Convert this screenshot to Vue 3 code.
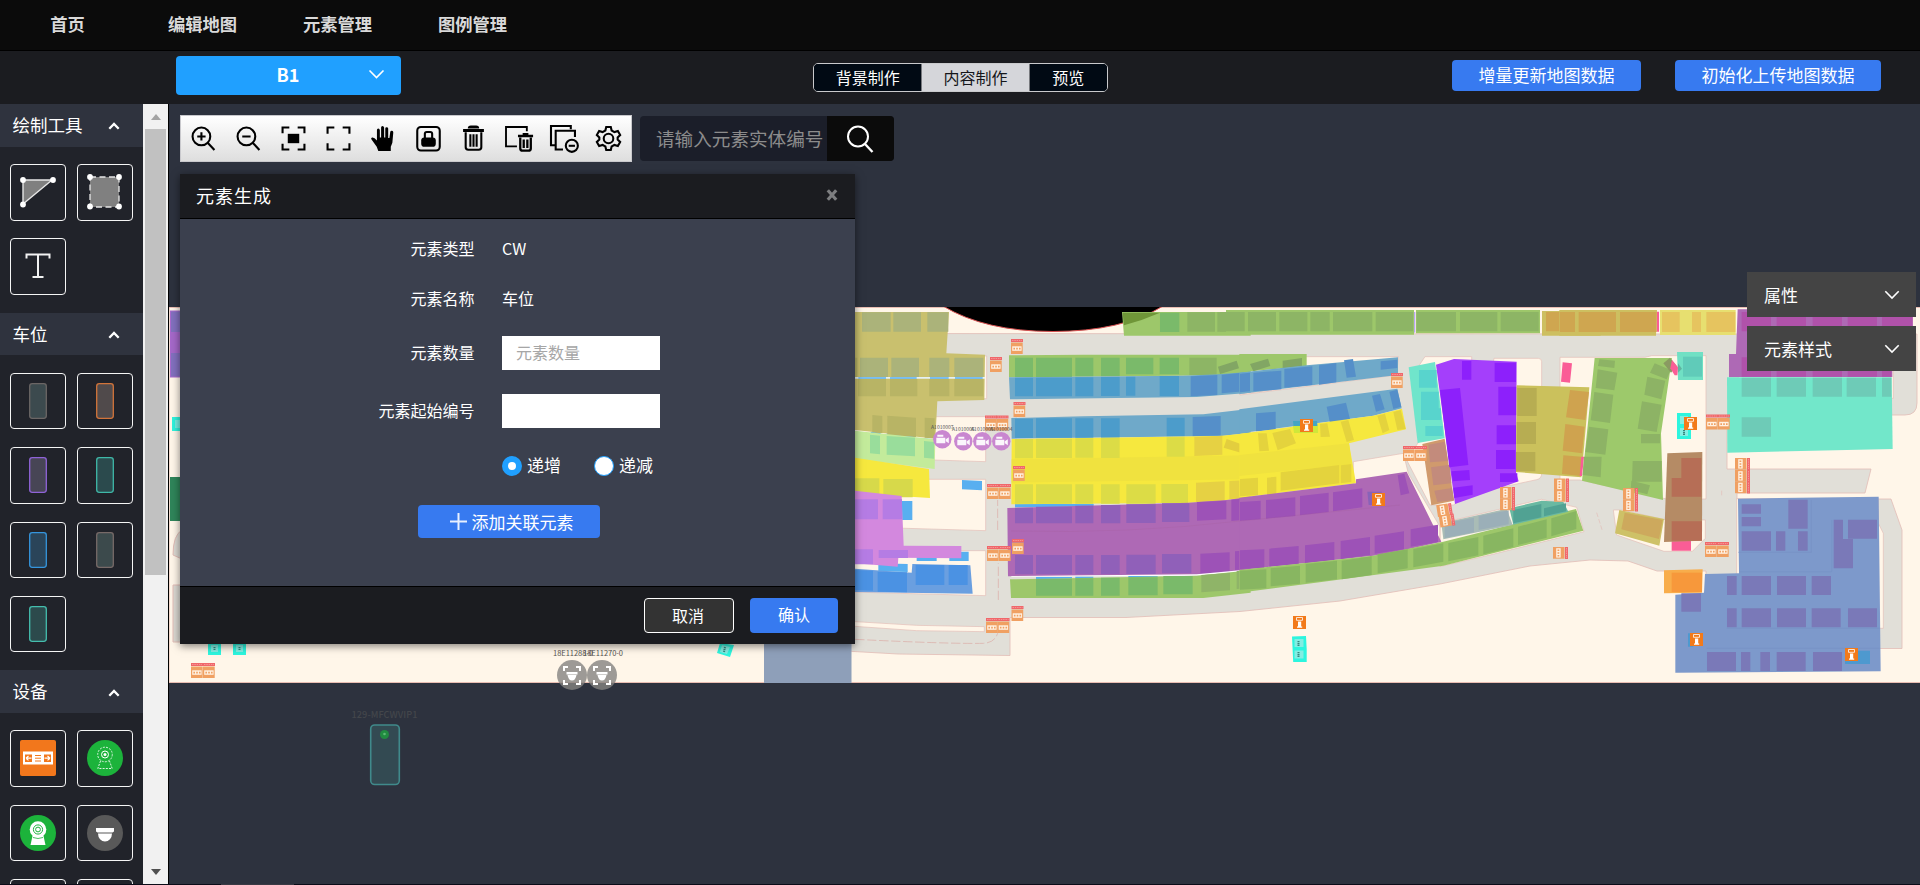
<script setup>
import { ref } from 'vue'

const navItems = ['首页', '编辑地图', '元素管理', '图例管理']
const tabs = ['背景制作', '内容制作', '预览']
const activeTab = ref(1)
const order = ref('asc')
const count = ref('')
const startNo = ref('')
const keyword = ref('')

const sections = [
  { title: '绘制工具', items: [{ k: 'poly' }, { k: 'rect' }, { k: 'text' }] },
  {
    title: '车位',
    items: [
      { k: 'slot', s: '#6b6665', f: '#3c4a4e' },
      { k: 'slot', s: '#d2743a', f: '#504a4b' },
      { k: 'slot', s: '#8f63d8', f: '#474555' },
      { k: 'slot', s: '#3fb8a8', f: '#2b4a4d' },
      { k: 'slot', s: '#3595dd', f: '#2a4459' },
      { k: 'slot', s: '#776a68', f: '#3c4a4c' },
      { k: 'slot', s: '#45beae', f: '#2c4a4c' }
    ]
  },
  { title: '设备', items: [{ k: 'gate' }, { k: 'camDash' }, { k: 'cam' }, { k: 'dome' }, { k: 'none' }, { k: 'none' }] }
]

// Parallelogram bays: [x, y, width, height, rise]
const bays = list =>
  list.map(([x, y, w, h, r = 0]) => `M${x} ${y}l${w} ${r}v${h}l${-w} ${-r}z`).join('')

const westShapes = [
  { f: '#58aff0', d: bays([[22, 230, 86, 10], [118, 230, 84, 10], [238, 230, 60, 10], [312, 230, 88, 10], [62, 395, 30, 10], [110, 400, 85, 12, 8], [220, 415, 35, 10, 3], [336, 540, 60, 28, 3], [155, 603, 32, 57], [200, 755, 60, 28], [298, 755, 58, 28], [85, 790, 88, 24, 2], [495, 612, 236, 10]]) },
  { f: '#c9c06e', d: 'M15 36H297L289 160L405 164L403 300L262 304L256 416L15 390Z' },
  { f: '#abb37a', d: bays([[36, 37, 86, 58], [130, 37, 83, 58], [232, 37, 63, 58], [30, 173, 84, 58], [124, 173, 83, 58], [238, 173, 60, 58], [313, 173, 87, 58]]) },
  { f: '#b8b465', d: bays([[24, 237, 84, 52], [120, 237, 82, 52], [238, 237, 60, 52], [313, 237, 87, 52], [67, 345, 30, 52, 3], [112, 347, 86, 58, 6], [224, 353, 30, 60, 2], [15, 173, 7, 58]]) },
  { f: '#e4f0f4', d: 'M15 231H405V236H15Z' },
  { f: '#58aff0', d: bays([[25, 232, 83, 4], [120, 232, 80, 4], [240, 232, 56, 4], [315, 232, 83, 4]]) },
  { f: '#c3eb9b', d: 'M15 392L256 418L254 507L15 476Z' },
  { f: '#99dd9b', d: bays([[60, 404, 30, 56, 3], [110, 408, 85, 56, 5], [222, 423, 30, 50, 3]]) },
  { f: '#f6e83e', d: 'M15 473L237 507L240 594L15 580Z' },
  { f: '#d7d94a', d: bays([[15, 535, 73, 47], [100, 537, 88, 55]]) },
  { f: '#d388de', d: 'M15 572L155 588L161 737L334 738L334 775L145 773L143 800L15 790Z' },
  { f: '#b57ce4', d: bays([[15, 598, 69, 60], [98, 598, 58, 60], [15, 748, 54, 45], [86, 750, 88, 24]]) },
  { f: '#6a9fe0', d: 'M15 806L185 818L187 792L361 796L368 881L15 876Z' },
  { f: '#4b92e3', d: bays([[15, 810, 54, 60, 2], [83, 815, 88, 60, 2], [197, 795, 86, 60], [296, 795, 57, 60]]) },
  { f: '#9dc76a', d: 'M477 166L700 164H1202V225L477 232ZM816 36H1202V107H822Z' },
  { f: '#7aba6a', d: bays([[495, 173, 54, 58], [558, 173, 108, 58], [676, 173, 54, 56], [753, 173, 56, 56], [828, 173, 82, 50], [929, 173, 58, 50], [930, 38, 58, 58]]) },
  { f: '#8db565', d: bays([[1018, 173, 82, 52], [1012, 37, 83, 58], [1102, 37, 84, 58], [1194, 37, 6, 58]]) },
  { f: '#82a664', d: 'M1104 200L1160 182L1167 205L1110 222Z' },
  { f: '#6fa9c9', d: 'M477 232L1000 227L1105 223L1202 215V278L1040 291L480 298ZM484 354L700 349L1060 343L1202 326V398L1115 408L485 416Z' },
  { f: '#4c9ccb', d: bays([[495, 233, 54, 56], [558, 233, 108, 56], [676, 232, 54, 57], [753, 231, 56, 57], [828, 230, 28, 57], [929, 228, 58, 60], [495, 356, 54, 58], [558, 355, 108, 58], [676, 355, 54, 58], [753, 355, 56, 58], [950, 353, 54, 56]]) },
  { f: '#558fc9', d: bays([[1022, 229, 80, 60, -4], [1115, 224, 85, 56, -8], [1028, 351, 84, 58, -3]]) },
  { f: '#f6e83e', d: 'M485 417L1110 408L1202 398V590L1130 600L1020 608L484 613Z' },
  { f: '#f0e23f', d: 'M485 478L1202 466V538L485 548Z' },
  { f: '#dcdc46', d: bays([[495, 417, 54, 58], [558, 416, 108, 58], [676, 415, 54, 58], [753, 414, 56, 60], [950, 412, 54, 58], [495, 553, 54, 58], [558, 553, 108, 58], [676, 553, 54, 58], [753, 553, 56, 58], [829, 553, 88, 58], [934, 552, 80, 57]]) },
  { f: '#e6d143', d: bays([[1033, 411, 84, 57, -4], [1038, 548, 86, 58, -4], [1138, 543, 62, 54, -3]]) },
  { f: '#e3ce3e', d: 'M1130 417L1183 436L1175 459L1121 443Z' },
  { f: '#ae69b5', d: 'M472 624L1015 608L1130 600L1202 590V810L1040 826L474 829Z' },
  { f: '#9060b9', d: bays([[495, 623, 54, 47], [558, 620, 108, 50], [676, 617, 54, 53], [753, 615, 58, 55], [829, 613, 88, 56], [936, 610, 82, 56], [495, 765, 54, 58], [558, 765, 108, 58], [676, 765, 54, 58], [753, 765, 56, 58], [829, 764, 88, 58], [936, 762, 88, 58]]) },
  { f: '#9d52b7', d: bays([[1041, 606, 88, 56, -4], [1144, 599, 56, 64, -5], [1051, 761, 88, 60, -4], [1155, 754, 45, 56, -3]]) },
  { f: '#fff', d: 'M484 838V830L1040 827L1202 812V808L1040 823L484 828Z' },
  { f: '#58aff0', d: bays([[558, 831, 108, 6], [676, 830, 54, 6], [835, 828, 88, 5]]) },
  { f: '#9dc76a', d: 'M480 838L1040 827L1202 811V878L1060 894H483Z' },
  { f: '#7aba6a', d: bays([[558, 837, 108, 50], [676, 835, 54, 52], [753, 833, 56, 54], [835, 832, 88, 54], [940, 828, 88, 55]]) },
  { f: '#8fb468', d: bays([[1054, 825, 86, 52, -6], [1160, 813, 40, 54, -3]]) }
]

const midShapes = [
  { f: '#9dc76a', d: 'M-42 150H522V224H-42ZM528 150H900V220H528Z' },
  { f: '#8db565', d: bays([[-60, 156, 74, 58], [24, 156, 84, 58], [118, 156, 84, 58], [211, 156, 58, 58], [279, 156, 118, 58], [407, 156, 112, 58], [530, 156, 118, 58], [660, 156, 112, 58], [782, 156, 114, 58]]) },
  { f: '#cdbf60', d: 'M906 153H1082V227H906Z' },
  { f: '#cfa650', d: bays([[918, 156, 86, 58], [1016, 156, 66, 58]]) },
  { f: '#9dc76a', d: 'M-2 282H200V318L-2 337Z' },
  { f: '#82a664', d: 'M30 312L84 296L91 318L40 334ZM128 302L186 294V318L128 325Z' },
  { f: '#6fa9c9', d: 'M-2 338L200 316L474 292V345L-2 402ZM-2 448L472 386L485 445L400 467L-2 520Z' },
  { f: '#558fc9', d: bays([[0, 341, 30, 56, -3], [40, 338, 84, 56, -6], [133, 327, 84, 56, -8], [237, 316, 52, 58, -7], [422, 304, 50, 25, -5], [48, 460, 59, 54, -5]]) + 'M312 301L339 297L348 350L320 353ZM260 440L318 428L330 478L270 490ZM396 407L420 402L434 448L408 455ZM448 395L472 389L484 440L460 447Z' },
  { f: '#f6e83e', d: 'M-2 522L400 467L486 446L498 508L327 550L348 670L-2 713Z' },
  { f: '#f0e23f', d: 'M-2 585L327 550L335 612L-2 648Z' },
  { f: '#e4d33d', d: bays([[0, 657, 54, 52, -4], [122, 637, 176, 55, -22], [302, 616, 32, 54, -4], [81, 653, 28, 56, -3]]) + 'M54 520H80L87 572L58 574ZM97 519L150 507L168 550L113 571ZM240 492L262 490L270 530L242 531ZM302 485L325 480L342 540L320 546ZM412 467L435 461L448 510L428 520ZM460 456L482 450L497 507L472 510Z' },
  { f: '#ae69b5', d: 'M-2 713L348 670L348 658L500 635L604 845L480 873L400 887L-2 930Z' },
  { f: '#9d52b7', d: bays([[0, 726, 62, 56, -4], [78, 720, 88, 56, -8], [180, 708, 86, 58, -10], [279, 697, 88, 57, -12], [0, 871, 73, 56, -3], [88, 866, 88, 54, -8], [195, 856, 88, 54, -10], [302, 843, 88, 54, -12], [404, 827, 88, 54, -13], [512, 808, 82, 52, -14]]) + 'M473 645L493 641L508 700L482 706Z' },
  { f: '#8863b8', d: 'M382 695H425V735H386Z' },
  { f: '#9dc76a', d: 'M-2 930L400 887L610 845L810 795L1008 747L1030 812L750 882L610 917L250 965L-2 998Z' },
  { f: '#88b661', d: bays([[0, 932, 79, 57, -4], [92, 925, 88, 54, -8], [197, 912, 94, 56, -10], [305, 902, 90, 56, -13], [413, 883, 90, 57, -15], [520, 867, 90, 55, -17], [625, 849, 90, 55, -18], [730, 827, 90, 56, -22], [834, 800, 86, 55, -22], [934, 775, 75, 54, -22]]) },
  { f: '#a9bcb6', d: 'M604 790L800 746L818 795L610 838Z' },
  { f: '#9bafb8', d: bays([[614, 790, 88, 44, -17], [716, 768, 90, 42, -17]]) },
  { f: '#6ab9a2', d: 'M808 745L905 722L970 726L985 755L820 794Z' },
  { f: '#51a293', d: bays([[820, 750, 84, 40, -18], [912, 745, 66, 24, -15]]) },
  { f: '#70e5cb', d: 'M506 322L585 306L614 535L533 549Z' },
  { f: '#58d4cd', d: bays([[537, 330, 53, 53], [543, 395, 53, 85], [553, 445, 50, 35], [556, 498, 52, 30]]) },
  { f: '#d09a6d', d: 'M547 552L614 536L642 722L574 736Z' },
  { f: '#c38b7c', d: 'M565 554L614 545L624 603L570 607ZM573 622L630 614L634 670L580 676ZM583 692L636 684L642 720L592 726Z' },
  { f: '#a43ffb', d: 'M588 314L642 297L830 305L828 637L836 664L645 732Z' },
  { f: '#8d20fb', d: bays([[666, 303, 28, 56], [764, 308, 64, 58], [775, 380, 54, 86], [770, 496, 58, 57], [768, 570, 58, 57], [780, 640, 52, 26]]) + 'M600 390L660 384L685 615L628 622ZM634 634L688 630L690 660L638 664ZM640 683L698 676V704L643 714Z' },
  { f: '#cbc15c', d: 'M830 376L1048 382L1024 652L828 636Z' },
  { f: '#b7ad52', d: bays([[832, 384, 58, 84], [830, 486, 58, 66], [828, 576, 58, 58]]) },
  { f: '#cfa34f', d: 'M990 390L1047 396L1036 480L978 472ZM976 492L1034 500L1026 580L968 572ZM970 586L1024 590V648L966 642Z' },
  { f: '#fa5d96', d: 'M968 307L996 310L990 368L963 365ZM1024 590H1032L1026 648H1019Z' }
]

const eastShapes = [
  { f: '#fa5d96', d: 'M290 155H297V215H290ZM335 840H393V872H335Z' },
  { f: '#cdbf60', d: 'M-2 150H291L288 227H-2Z' },
  { f: '#cfa650', d: bays([[0, 156, 45, 60], [56, 156, 112, 60], [180, 156, 110, 60]]) },
  { f: '#e7df70', d: 'M300 150H527V225H300Z' },
  { f: '#e6c45f', d: bays([[306, 156, 53, 60], [396, 156, 27, 60], [439, 156, 87, 60]]) },
  { f: '#9dc96b', d: 'M104 294H336L303 520L309 720L66 662Z' },
  { f: '#8db365', d: 'M118 298L165 302L163 324L114 318ZM113 328L172 338L163 391L107 384ZM103 396L160 404L150 489L92 481ZM87 500L145 508L136 584L76 576ZM72 590H125L122 652L68 645ZM284 310L332 330L320 358L270 338ZM262 350L316 362L304 418L253 404ZM246 424L305 434L290 516L233 506ZM243 522H300V550H243ZM218 603H305V665H216ZM214 662L270 676L262 703L212 690Z' },
  { f: '#70e0c4', d: 'M351 276H429V360H354Z' },
  { f: '#60cbb9', d: 'M369 290H426V350H369Z' },
  { f: '#8a9a62', d: 'M310 310L330 293L350 318L333 338Z' },
  { f: '#fa5d96', d: 'M336 300L354 322L352 346L344 346L331 325Z' },
  { f: '#62b3a0', d: 'M354 310L366 326L354 338Z' },
  { f: '#ae69b5', d: 'M533 148H1058V200H997V351H507V282H528Z' },
  { f: '#b052aa', d: bays([[545, 156, 88, 58], [650, 156, 88, 58], [758, 156, 88, 58], [863, 156, 88, 58], [966, 156, 92, 42], [545, 292, 88, 58], [650, 292, 88, 58], [758, 292, 88, 58], [863, 292, 88, 58], [966, 292, 28, 58]]) },
  { f: '#72e7ca', d: 'M501 352H995L998 567L502 578Z' },
  { f: '#6ecbb7', d: bays([[545, 353, 88, 57], [650, 353, 88, 57], [758, 353, 88, 57], [860, 353, 88, 57], [966, 353, 28, 57], [545, 472, 88, 58]]) },
  { f: '#b58b65', d: 'M322 580L427 576L426 842L312 846Z' },
  { f: '#b66e56', d: 'M364 594H424V710H335V654H364ZM335 784H426V842H335Z' },
  { f: '#cec167', d: 'M178 750L312 777L298 857L165 820Z' },
  { f: '#cda95d', d: 'M194 758L308 780L297 837L184 808Z' },
  { f: '#f8ad4b', d: 'M312 931L428 928L426 998L312 1000Z' },
  { f: '#f7983b', d: 'M335 938H426V996H335Z' },
  { f: '#7d99cb', d: 'M534 716L956 710L962 1234L346 1238V1004L432 998L435 942L537 940Z' },
  { f: '#7a79b8', d: bays([[545, 733, 58, 28], [545, 771, 58, 28], [685, 719, 58, 87], [545, 814, 88, 58], [648, 814, 28, 58], [714, 814, 29, 58], [821, 779, 28, 58], [864, 779, 87, 57], [821, 837, 58, 88], [501, 948, 29, 57], [545, 948, 88, 57], [651, 948, 87, 57], [755, 948, 58, 57], [501, 1045, 29, 57], [545, 1045, 88, 57], [651, 1045, 87, 57], [755, 1045, 87, 57], [864, 1045, 87, 57], [364, 1000, 59, 55], [441, 1176, 87, 57], [543, 1176, 28, 57], [601, 1176, 29, 57], [650, 1176, 87, 57], [759, 1176, 87, 57]]) },
  { f: '#4e99cf', d: 'M384 1120H400V1160H384ZM855 1172H930V1212H855Z' }
]

const gates = [
  [1011, 339], [990, 357], [1013.5, 402], [985, 415.5], [996.5, 415.5], [1013, 466], [987, 484], [999, 484],
  [1012, 539], [987, 546], [999, 546], [1011.5, 606], [986, 618], [997.5, 618], [1391, 373], [1403, 446],
  [1415, 446], [1706, 414.5], [1718, 414.5], [1705, 542], [1717, 542], [191, 663], [203, 663]
]
const sideGates = [
  [1500, 487, 90], [1500, 498.5, 90], [1554, 478.5, 90], [1554, 490, 90], [1553, 547, 90], [1436, 503, 81],
  [1438.5, 513.5, 81], [1623, 488, 90], [1623, 499.5, 90], [1735, 458, 90], [1735, 470, 90], [1735, 481.5, 90]
]
const posts = [[1300, 419], [1372, 493], [1293, 616], [1684, 417], [1690, 633], [1845, 648]]
const mapCams = [[942.3, 439.3, 'A1010007'], [963.3, 441.3, 'A1010006'], [982.3, 441.3, 'A1010005'], [1001.3, 441.3, 'A1010004']]
</script>

<template>
  <div class="page">
    <nav class="nav">
      <a v-for="n in navItems" :key="n">{{ n }}</a>
    </nav>

    <header class="bar">
      <div class="floor">
        <b>B1</b>
        <svg width="17" height="11" viewBox="0 0 17 11"><path d="M1.5 1.5L8.5 8.5L15.5 1.5" fill="none" stroke="#fff" stroke-width="1.6" /></svg>
      </div>
      <div class="tabs">
        <span v-for="(t, i) in tabs" :key="t" :class="{ on: i === activeTab }" @click="activeTab = i">{{ t }}</span>
      </div>
      <div class="actions">
        <button class="blue">增量更新地图数据</button>
        <button class="blue">初始化上传地图数据</button>
      </div>
    </header>

    <div class="main">
      <aside class="side">
        <section v-for="s in sections" :key="s.title">
          <h3>
            {{ s.title }}
            <svg width="12" height="8" viewBox="0 0 12 8"><path d="M1.3 6.8L6 2L10.700 6.800" fill="none" stroke="#fff" stroke-width="2.300" /></svg>
          </h3>
          <div class="tools">
            <div v-for="(it, i) in s.items" :key="i" class="tool">
              <svg width="54" height="54" viewBox="0 0 54 54">
                <g v-if="it.k === 'poly'">
                  <path d="M12 15H41L12 39Z" fill="#808080" stroke="#e6e6e6" stroke-width="1.400" />
                  <circle cx="12" cy="15" r="2.900" fill="#fff" /><circle cx="42" cy="15" r="2.900" fill="#fff" /><circle cx="12" cy="39.500" r="2.900" fill="#fff" />
                </g>
                <g v-else-if="it.k === 'rect'">
                  <rect x="12" y="12" width="29" height="30" fill="#808080" />
                  <path d="M12 12H41V42H12Z" fill="none" stroke="#e6e6e6" stroke-width="1.300" stroke-dasharray="6 3.500" />
                  <circle cx="12" cy="12" r="2.900" fill="#fff" /><circle cx="41" cy="12" r="2.900" fill="#fff" /><circle cx="12" cy="41.500" r="2.900" fill="#fff" /><circle cx="41" cy="41.500" r="2.900" fill="#fff" />
                </g>
                <path v-else-if="it.k === 'text'" d="M15.500 19.500V15.500H38.500V19.500M27 15.500V38M21.500 38H32.500" fill="none" stroke="#f2f2f2" stroke-width="2" />
                <rect v-else-if="it.k === 'slot'" x="18.700" y="9.700" width="16.600" height="34.600" rx="2.500" :fill="it.f" :stroke="it.s" stroke-width="1.300" />
                <g v-else-if="it.k === 'gate'">
                  <rect x="9" y="9" width="36" height="36" rx="2" fill="#f2771c" />
                  <rect x="12" y="20.500" width="30" height="13" fill="#fff" />
                  <path d="M14 23.500h7v7.500h-7zM33 23.500h7v7.500h-7z" fill="#f2771c" />
                  <path d="M15 27.200h5.500M15 27.200l2.500-2.200M15 27.200l2.500 2.200M39 27.200h-5.500M39 27.200l-2.500-2.200M39 27.200l-2.500 2.200" stroke="#fff" stroke-width="1.200" fill="none" />
                  <path d="M24 24.500h6M24 27.200h6M24 30h6" stroke="#f2771c" stroke-width="1" />
                </g>
                <g v-else-if="it.k === 'camDash'">
                  <circle cx="27" cy="27" r="18" fill="#1cb33b" />
                  <circle cx="27" cy="23.500" r="7.300" fill="none" stroke="#d9f4de" stroke-width="1" stroke-dasharray="2 1.200" />
                  <circle cx="27" cy="23.500" r="3.500" fill="none" stroke="#fff" /><circle cx="27" cy="23.500" r="1.500" fill="#fff" />
                  <path d="M22.500 30L19.800 37.500H34.200L31.500 30" fill="none" stroke="#d9f4de" stroke-width="1" stroke-dasharray="2 1.200" />
                </g>
                <g v-else-if="it.k === 'cam'">
                  <circle cx="27" cy="27" r="18" fill="#1cb33b" />
                  <path d="M21.500 30H32.500L34.500 39H19.500Z" fill="#fff" />
                  <circle cx="27" cy="23.500" r="8.300" fill="#fff" />
                  <circle cx="27" cy="23.500" r="4.600" fill="none" stroke="#1cb33b" stroke-width="1" /><circle cx="27" cy="23.500" r="2.400" fill="none" stroke="#1cb33b" stroke-width="1" />
                  <path d="M22 31.500Q27 33.500 32 31.500" stroke="#1cb33b" fill="none" stroke-width=".8" />
                </g>
                <g v-else-if="it.k === 'dome'">
                  <circle cx="27" cy="27" r="18" fill="#595959" />
                  <path d="M18 22h18v3.600q-1 .8-1.500.8h-15q-.500 0-1.500-.8zM20 27.500h14a7 8 0 0 1-14 0z" fill="#fff" />
                </g>
              </svg>
            </div>
          </div>
        </section>
      </aside>
      <div class="scroll">
        <i class="up"></i><div class="thumb"></div><i class="down"></i>
      </div>

      <main class="canvas">
        <svg class="map" width="1751" height="780" viewBox="169 104 1751 780">
          <defs>
            <g id="gate">
              <rect width="12" height="3" fill="#f0676a" />
              <path d="M1 1.500h10" stroke="#f8a0a0" stroke-width=".8" stroke-dasharray="1.500 .8" />
              <rect y="3.500" width="11.700" height="11.500" fill="#f0a062" />
              <rect x="1.200" y="7.300" width="9.400" height="4.500" fill="#fff1e2" />
              <path d="M2.400 9.600h1.600M5.200 9.600h1.600M8 9.600h1.600" stroke="#f0a062" stroke-width="1.800" />
            </g>
            <g id="post">
              <rect width="13" height="13" fill="#f27a1a" />
              <path d="M3.500 1.500h6v2.800h-6z" fill="none" stroke="#fff" stroke-width=".8" />
              <path d="M5 5.500h3.200v5h1v1.200H4v-1.200h1z" fill="#fff" />
            </g>
            <clipPath id="sheet"><rect x="169" y="307" width="1751" height="376" /></clipPath>
          </defs>

          <rect x="169" y="307.500" width="1752" height="375" fill="#fff6e9" stroke="#e9bdb2" />
          <g clip-path="url(#sheet)">
            <path fill="#e1dfd8" stroke="#e2bdb6" stroke-width=".8" d="M845 333.500L1735 334H1917V403Q1917 415 1905 415H1727V469H1871L1865 493H1737V499H1891L1902 530V648.500H1706V571H1657L1628 561L1590 560L1560 563L1530 566L1440 584L1340 601L1240 611.500L1126 617.500H1010V655.500L898 654L845 651Z" />
            <g transform="translate(850 300) scale(.33333)" fill="#fff6e9" stroke="#e2bdb6" stroke-width="2">
              <path d="M0 168H410V296H0ZM0 333L260 350H407V485L250 480L0 458ZM0 518L240 538H407V692L0 680ZM0 745L240 752H407V887L0 876ZM0 964L200 976L403 980V995L200 992L0 978Z" />
            </g>
            <g transform="translate(1240 260) scale(.33333)" fill="#fff6e9" stroke="#e2bdb6" stroke-width="2">
              <path d="M180 290H475L470 345L0 405V320ZM340 605L490 580L505 640L600 800V850L340 700ZM535 320L555 290H695V700L640 735L570 735L500 600L540 540ZM762 295H895Q905 295 905 305V640Q905 656 890 659L700 700ZM600 790L905 718L1010 742L1032 815L750 885L600 920ZM-2 310V402L100 390Z" />
            </g>
            <g transform="translate(1560 260) scale(.33333)" fill="#fff6e9" stroke="#e2bdb6" stroke-width="2">
              <path d="M0 292H255L275 287H438V717H320L60 660H0ZM160 750H185L320 780H436V835L397 874H312L170 825ZM535 287H1000V415H535ZM955 790L970 820V1105H500V960H530V716H955Z" />
              <path d="M110 758L128 815M485 692V710" stroke-dasharray="14 6" />
            </g>
            <path d="M943 306Q985 331.500 1053 331.500Q1122 331.500 1163 306Z" fill="#000" stroke="#d65050" />
            <g transform="translate(850 300) scale(.33333)">
              <path v-for="(s, i) in westShapes" :key="i" :fill="s.f" :d="s.d" />
              <path d="M818 38L930 38Q880 60 822 76Z" fill="#6f9638" />
              <path d="M15 1018Q300 1032 400 1030Q440 1028 445 990M445 900V790M443 690V600" fill="none" stroke="#dcb4ae" stroke-width="2.500" stroke-dasharray="28 8" />
            </g>
            <g transform="translate(1240 260) scale(.33333)">
              <path v-for="(s, i) in midShapes" :key="i" :fill="s.f" :d="s.d" />
              <path d="M524 156V218" stroke="#b9a8f0" stroke-width="4" />
            </g>
            <g transform="translate(1560 260) scale(.33333)">
              <path v-for="(s, i) in eastShapes" :key="i" :fill="s.f" :d="s.d" />
              <path d="M440 1165H960M500 1105H960M754 720V877H535M815 780V935H540" fill="none" stroke="#7791c6" stroke-width="2" />
            </g>
            <path d="M1011 531Q1130 534 1240 521L1400 505" fill="none" stroke="#a05a90" stroke-opacity=".18" />
            <rect x="170.500" y="311" width="12" height="66" fill="#8270be" stroke="#a868cc" /><rect x="171" y="332" width="12" height="21" fill="#a468c8" />
            <path d="M172 417h12v14h-12z" fill="#2ff3dd" /><path d="M175 420h8v8h-8z" fill="#74efe2" />
            <rect x="170" y="477" width="14" height="44" fill="#2f855a" />
            <path d="M182 530Q173 535 173 555L182 559ZM173 585H184V642H173Z" fill="#dcd9d2" stroke="#e2bdb6" />
            <path d="M208 643h13v12h-13zM233 643h13v12h-13zM720 643l14 2l-4 12l-13-4zM1292 636.500l14-.5l.7 13v13h-13.500zM1677 413h14v26h-14z" fill="#2df5de" />
            <path d="M211 645h7v7h-7zM236 645h7v7h-7zM722 645l8 2l-3 7l-7-2zM1294.500 639h9v8h-9zM1294.500 650.500h9v8h-9zM1680 416h8v8h-8zM1680 428h8v8h-8z" fill="#82eee3" />
            <path d="M1298.500 641v5M1298.500 652v5M1684 430v5M214.500 647v3M239.500 647v3M725 647l-1 5" stroke="#35857e" stroke-width="2" stroke-dasharray="1.300 .6" />
            <rect x="764" y="640" width="87.500" height="43" fill="#8e9fb9" />
            <path d="M1293 426h25v7h-24z" fill="#cfe83a" /><path d="M1293 421h24l.5 5h-24z" fill="#45a5c4" />
            <use v-for="(g, i) in gates" :key="'g' + i" href="#gate" :transform="`translate(${g[0]} ${g[1]})`" />
            <use v-for="(g, i) in sideGates" :key="'s' + i" href="#gate" :transform="`translate(${g[0] + 15} ${g[1]}) rotate(${g[2]})`" />
            <use v-for="(p, i) in posts" :key="'p' + i" href="#post" :transform="`translate(${p[0]} ${p[1]})`" />
            <g v-for="c in mapCams" :key="c[2]" :transform="`translate(${c[0]} ${c[1]})`">
              <circle r="9.200" fill="#c987d0" />
              <path d="M-6-1.500h9v5.500h-9zM3.500 0l3-2v6l-3-2zM-5-4.500h6v2h-6z" fill="#fff" fill-opacity=".92" />
              <text y="-10.800" text-anchor="middle" class="tiny">{{ c[2] }}</text>
            </g>
          </g>

          <g v-for="x in [572, 602]" :key="x" :transform="`translate(${x} 675)`">
            <circle r="15" fill="#858381" fill-opacity=".8" />
            <path d="M-8-4v-4h4M4-8h4v4M8 5v4h-4M-4 9h-4v-4" fill="none" stroke="#fff" stroke-width="2" />
            <path d="M-5.500-3h11v2.500h-11zM-4.500 0h9q-1 5.500-4.500 5.500t-4.500-5.500z" fill="#fff" />
          </g>
          <text x="573" y="656" text-anchor="middle" textLength="40" class="label">18E11288-0</text>
          <text x="603" y="656" text-anchor="middle" textLength="40" class="label">18E11270-0</text>
          <text x="384.500" y="718" text-anchor="middle" textLength="66" class="ghost">129-MFCWVIP1</text>
          <rect x="370.700" y="725" width="28.600" height="59.500" rx="4" fill="#334a52" stroke="#408a8b" stroke-width="1.600" />
          <circle cx="384.500" cy="734.500" r="4.500" fill="#218b40" /><circle cx="384.500" cy="734" r="1.300" fill="#5bb873" />
        </svg>

        <div class="top">
          <div class="toolbar">
            <svg viewBox="0 0 24 24"><circle cx="10" cy="10" r="8.500" /><path d="M16 16L22.500 23M6 10H14M10 6V14" /></svg>
            <svg viewBox="0 0 24 24"><circle cx="10" cy="10" r="8.500" /><path d="M16 16L22.500 23M6 10H14" /></svg>
            <svg viewBox="0 0 24 24"><path d="M1.500 7V1.500H8M16 1.500H22.500V7M22.500 17V22.500H16M8 22.500H1.500V17" /><rect x="6.500" y="7.500" width="11" height="9" fill="#000" stroke="none" /></svg>
            <svg viewBox="0 0 24 24"><path d="M1.500 7.500V1.500H8M16 1.500H22.500V7.500M22.500 16.500V22.500H16M8 22.500H1.500V16.500" /></svg>
            <svg viewBox="0 0 24 24"><path d="M7 24L5.500 20L.5 13Q-.5 11.500 1 11Q3 10.500 5.700 14V4Q5.700 2.500 7 2.500T8.500 4V11H9.700V1.500Q9.700 0 11 0T12.600 1.500V11H13.700V2.500Q13.700 1.200 15 1.200T16.500 2.500V11.500H17.700L18.500 5.500Q19 4.300 20.200 4.600T21.400 6.200L20.500 16L19 20V24Z" fill="#000" stroke="none" /></svg>
            <svg viewBox="0 0 24 24"><rect x="1.200" y="1" width="21.600" height="22.500" rx="3.500" /><path d="M8.500 12V7.500Q8.500 5.700 10.300 5.700H13.700Q15.500 5.700 15.500 7.500V12" /><rect x="5" y="11" width="14" height="9" rx="3" fill="#000" stroke="none" /></svg>
            <svg viewBox="0 0 24 24"><path d="M8 2.500Q8 1 9.500 1H14.500Q16 1 16 2.500M2 4.300H22" stroke-width="3" /><path d="M4.500 6V20.500Q4.500 22.800 7 22.800H17Q19.500 22.800 19.500 20.500V6M9 8V20M12 8V20M15 8V20" /></svg>
            <svg viewBox="0 0 24 24"><path d="M10.500 19.500H0V1H20V5" stroke-width="1.800" /><path d="M11.500 9.500H26M16 8H21.500" stroke-width="2.400" /><path d="M13.700 11V21.500Q13.700 23.700 16 23.700H21.500Q23.800 23.700 23.800 21.500V11M17 13V21M20.500 13V21" stroke-width="2.200" /></svg>
            <svg viewBox="0 0 24 24"><path d="M4 18.500H0V0H19V3" /><path d="M11.500 22.500H4.500V4.500H23V10.500" /><circle cx="20" cy="19" r="5.800" /><path d="M17 19H23" /></svg>
            <svg viewBox="0 0 24 24"><path d="M9.800 1H14.200L15 4.300L17.700 5.800L21 4.800L23.200 8.600L20.800 11V13L23.200 15.400L21 19.200L17.700 18.200L15 19.700L14.200 23H9.800L9 19.700L6.300 18.200L3 19.200L.8 15.400L3.200 13V11L.8 8.600L3 4.800L6.300 5.800L9 4.300Z" /><circle cx="12" cy="12" r="4.600" /></svg>
          </div>
          <div class="search">
            <input v-model="keyword" placeholder="请输入元素实体编号" />
            <button><svg width="30" height="30" viewBox="0 0 30 30"><circle cx="13" cy="12.500" r="10" fill="none" stroke="#fff" stroke-width="2" /><path d="M20 20L27.500 28" stroke="#fff" stroke-width="2.400" /></svg></button>
          </div>
        </div>

        <div class="dialog">
          <div class="dhead">
            <span>元素生成</span>
            <svg width="12" height="12" viewBox="0 0 12 12"><path d="M1.800 1.300L10.200 10.700M10.200 1.300L1.800 10.700" stroke="#7d7e80" stroke-width="3.200" /></svg>
          </div>
          <div class="dbody">
            <div class="row r1"><label>元素类型</label><span>CW</span></div>
            <div class="row r2"><label>元素名称</label><span>车位</span></div>
            <div class="row r3"><label>元素数量</label><input v-model="count" placeholder="元素数量" /></div>
            <div class="row r4"><label>元素起始编号</label><input v-model="startNo" /></div>
            <div class="row r5">
              <label></label>
              <span class="radio" @click="order = 'asc'"><i :class="{ on: order === 'asc' }"></i><em>递增</em></span>
              <span class="radio" @click="order = 'desc'"><i :class="{ on: order === 'desc' }"></i><em>递减</em></span>
            </div>
            <button class="blue add">
              <svg width="17" height="17" viewBox="0 0 17 17"><path d="M8.500 0V17M0 8.500H17" stroke="#e8f0ff" stroke-width="2" /></svg>添加关联元素
            </button>
          </div>
          <div class="dfoot">
            <button class="cancel">取消</button>
            <button class="blue ok">确认</button>
          </div>
        </div>

        <div class="panels">
          <div v-for="p in ['属性', '元素样式']" :key="p">
            {{ p }}
            <svg width="16" height="10" viewBox="0 0 16 10"><path d="M1.300 1.300L8 8L14.700 1.300" fill="none" stroke="#fff" stroke-width="1.600" /></svg>
          </div>
        </div>
      </main>
    </div>
    <div class="bottom"><i></i></div>
  </div>
</template>

<style>
body { margin: 0; background: #1b1c20; }
</style>

<style scoped>
.page, .page * { box-sizing: border-box; }
.page {
  width: 1920px; height: 885px; overflow: hidden; display: flex; flex-direction: column;
  font: 17px/1 "Noto Sans CJK SC", "Microsoft YaHei", sans-serif; color: #fff;
}
button, input { font: inherit; color: inherit; border: 0; margin: 0; padding: 0; outline: none; }
.nav { height: 51px; flex: none; display: flex; background: #0b0b0b; border-bottom: 1px solid #000; }
.nav a { width: 135px; text-align: center; font-size: 17.3px; font-weight: 700; line-height: 47px; color: #d9d9d9; }
.bar { height: 53px; flex: none; display: flex; align-items: flex-start; background: #1b1c20; padding: 5px 39px 0 176px; }
.floor { width: 225px; height: 39px; border-radius: 4px; background: #20a0ff; display: flex; align-items: center; padding-right: 16px; }
.floor b { flex: 1; text-align: center; font-size: 18px; padding-left: 32px; line-height: 34px; padding-bottom: 3px; }
.floor svg { margin-bottom: 2px; }
.tabs { margin: 7px 0 0 412px; height: 29px; width: 295px; display: flex; border: 1px solid #c9cacc; border-radius: 5px; overflow: hidden; font-size: 16px; }
.tabs span { width: 108px; text-align: center; line-height: 26px; background: #010a14; }
.tabs span + span { border-left: 1px solid #77797d; }
.tabs span:last-child { width: 79px; }
.tabs .on { background: #d5d6da; color: #15161a; }
.actions { margin: 4px 0 0 auto; display: flex; gap: 34px; }
.actions .blue { height: 31px; width: 189px; line-height: 29px; padding-bottom: 2px; }
.actions .blue + .blue { width: 206px; }
.blue { background: #377af0; border-radius: 4px; color: #fff; }

.main { height: 780px; flex: none; display: flex; }
.side { width: 143px; flex: none; background: #21232a; overflow: hidden; }
.side h3 { margin: 0; height: 42.5px; padding: 0 23px 1px 12.5px; background: #2f333e; display: flex; align-items: center; justify-content: space-between; font-size: 17.500px; font-weight: 400; }
.side h3 svg { margin-top: 3px; }
.tools { display: grid; grid-template-columns: 56px 56px; column-gap: 11px; padding: 17.5px 0 0 10px; }
.tool { height: 56.5px; margin-bottom: 17.9px; border: 1px solid #f5f5f5; border-radius: 4px; }
.tool svg { display: block; }
.scroll { width: 26px; flex: none; background: #f1f1f1; border-right: 1px solid #000; padding: 10px 2px 6px; display: flex; flex-direction: column; align-items: center; }
.scroll i { border: 5.500px solid transparent; height: 0; }
.scroll .up { border-top: 0; border-bottom: 6px solid #a3a3a3; margin-bottom: 9px; }
.scroll .down { border-bottom: 0; border-top: 6px solid #505050; margin-top: auto; margin-bottom: 3px; }
.thumb { width: 21px; height: 446px; background: #c1c1c1; }

.canvas { flex: 1; position: relative; background: #2d323e; overflow: hidden; }
.map { position: absolute; left: 0; top: 0; }
.tiny { font-size: 5px; fill: #555; }
.label { font-size: 7.500px; fill: #56544f; }
.ghost { font-size: 9.200px; font-weight: 500; fill: #43464b; }
.top { position: relative; display: flex; padding: 11px 0 0 11px; gap: 8px; }
.toolbar { width: 452px; height: 47px; display: flex; align-items: center; justify-content: space-between; padding: 0 10px; background: linear-gradient(#fff, #dedede); border: 1px solid #c9c9cd; }
.toolbar svg { width: 25px; height: 25px; fill: none; stroke: #000; stroke-width: 2; overflow: visible; }
.search { margin-top: 1px; width: 254px; height: 45px; display: flex; border-radius: 4px; overflow: hidden; background: #1b1e29; }
.search input { width: 187px; padding: 0 0 3px 16px; background: none; font-size: 18.600px; }
.search input::placeholder { color: #8c8c8c; opacity: 1; }
.search button { width: 67px; background: #0b0b0b; display: flex; align-items: center; justify-content: center; padding-right: 2px; }

.dialog { position: absolute; left: 11px; top: 70px; width: 675px; height: 470px; background: #3b404e; box-shadow: 0 2px 8px rgba(0, 0, 0, .5); display: flex; flex-direction: column; }
.dhead { height: 45px; flex: none; background: #1b1c20; border-bottom: 1px solid #000; display: flex; align-items: center; justify-content: space-between; padding: 0 17px 2px 16px; font-size: 18px; letter-spacing: 1px; }
.dbody { flex: 1; font-size: 16px; display: flex; flex-direction: column; padding-top: 13px; }
.row { display: flex; align-items: center; height: 34px; flex: none; }
.row label, .row > span:not(.radio), .radio em { padding-bottom: 3px; font-style: normal; }
.row label { width: 294.5px; margin-right: 27.5px; text-align: right; }
.row input { width: 158px; height: 34px; background: #fff; color: #333; padding: 0 0 2px 14px; }
.row input::placeholder { color: #a6a6a6; opacity: 1; }
.r2 { margin-top: 16px; }
.r3 { margin-top: 20px; }
.r4 { margin-top: 24px; }
.r5 { margin-top: 21px; font-size: 17px; }
.radio { width: 92px; display: flex; align-items: center; gap: 5px; }
.radio i { width: 20px; height: 20px; border-radius: 50%; background: #fff; border: 1px solid #20a0ff; }
.radio i.on { border: 6.500px solid #20a0ff; }
.add { margin: 22px 0 0 238px; width: 182px; height: 33px; font-size: 17px; display: flex; align-items: center; justify-content: center; gap: 5px; padding: 0 0 1px 5px; }
.dfoot { height: 58px; flex: none; background: #1b1c20; border-top: 1px solid #000; display: flex; justify-content: flex-end; gap: 16px; padding: 11px 17px 0 0; font-size: 16px; }
.cancel { width: 90px; height: 35px; background: #333; border: 1px solid #fff; border-radius: 4px; padding: 0 2px 1px 0; }
.ok { width: 88px; height: 35px; padding-bottom: 3px; }

.panels { position: absolute; right: 4px; top: 168px; width: 169px; display: flex; flex-direction: column; gap: 9px; }
.panels div { height: 45px; background: #444; display: flex; align-items: center; justify-content: space-between; padding: 0 16px 1px 17px; }
.panels svg { margin-top: 2px; }
.bottom { height: 1px; background: #0b0c18; }
.bottom i { display: block; width: 73px; height: 1px; margin-left: 221px; background: #3a3a44; }
</style>
